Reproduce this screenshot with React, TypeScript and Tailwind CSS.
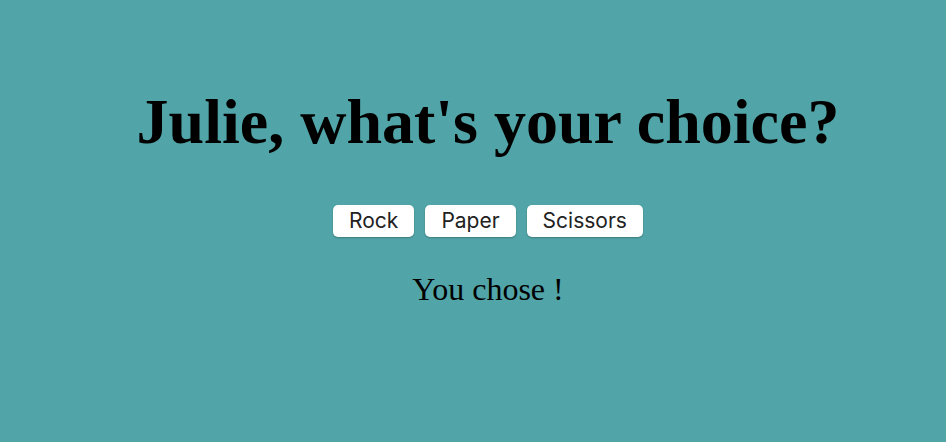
export default function App() {
  return (
    <div className="min-h-[442px] w-full bg-[#51a5a8] pl-[30px] text-center">
      <div className="flex flex-col items-center pt-[82px]">
        <h1 className="font-['Liberation_Serif',serif] text-[64px] font-bold leading-[80px] text-black">
          Julie, what's your choice?
        </h1>
        <div className="mt-[43px] flex justify-center gap-[11px] font-['Inter',sans-serif]">
          {['Rock', 'Paper', 'Scissors'].map((t) => (
            <button
              key={t}
              className="h-[32px] rounded-[5px] bg-white px-[16px] text-[21px] leading-[32px] text-[#222] shadow-[0_1px_2px_rgba(0,0,0,0.25)]"
            >
              {t}
            </button>
          ))}
        </div>
        <p className="mt-[32px] font-['Liberation_Serif',serif] text-[32px] leading-[40px] text-black">
          You chose !
        </p>
      </div>
    </div>
  );
}
